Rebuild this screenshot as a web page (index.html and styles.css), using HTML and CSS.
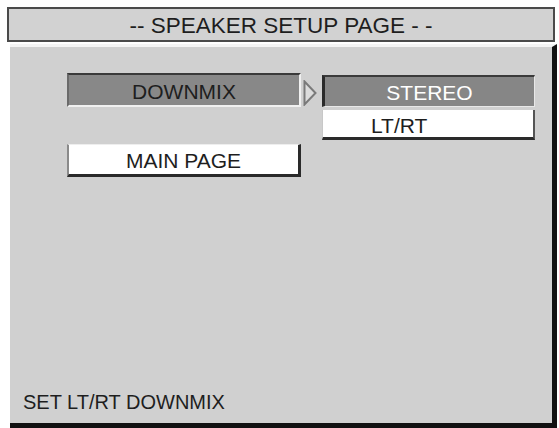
FILE: index.html
```html
<!DOCTYPE html>
<html lang="en">
<head>
    <meta charset="UTF-8">
    <meta name="viewport" content="width=device-width, initial-scale=1.0">
    <title>Speaker Setup</title>
    <link rel="stylesheet" href="styles.css">
</head>
<body>
    <div class="osd">
        <div class="title-bar">-- SPEAKER SETUP PAGE - -</div>

        <div class="panel">
            <div class="menu">
                <div class="menu-items">
                    <div class="item selected">DOWNMIX</div>
                    <div class="item raised">MAIN PAGE</div>
                </div>

                <!-- submenu pointer -->
                <svg class="pointer" width="14" height="26" viewBox="0 0 14 26">
                    <polygon points="1.5,1.5 12.5,13 1.5,24.5" fill="#dcdcdc" stroke="#7a7a7a" stroke-width="2"/>
                </svg>

                <div class="options">
                    <div class="option current">STEREO</div>
                    <div class="option">LT/RT</div>
                </div>
            </div>

            <div class="status">SET LT/RT DOWNMIX</div>
        </div>
    </div>
</body>
</html>
```

FILE: styles.css
```css
* {
    margin: 0;
    padding: 0;
    box-sizing: border-box;
}

body {
    font-family: "Liberation Sans", Arial, sans-serif;
    background: white;
    color: #1e1e1e;
    width: 559px;
    height: 428px;
    overflow: hidden;
}

.osd {
    padding-top: 7px;
}

.title-bar {
    margin-left: 7px;
    width: 548px;
    height: 35px;
    background: #d2d2d2;
    border: 2px solid #4a4a4a;
    text-align: center;
    font-size: 22.5px;
    line-height: 34px;
}

.panel {
    margin: 2px 0 0 10px;
    width: 547px;
    height: 384px;
    background: #d0d0d0;
    border-top: 3px solid #f4f4f4;
    border-right: 5px solid #111;
    border-bottom: 5px solid #111;
    display: flex;
    flex-direction: column;
    padding: 26px 0 0 57px;
}

.menu {
    display: flex;
    align-items: flex-start;
}

.menu-items {
    display: flex;
    flex-direction: column;
    gap: 37px;
    width: 234px;
}

.item {
    height: 34px;
    font-size: 21px;
    line-height: 33px;
    text-align: center;
}

.item.selected {
    background: #888888;
    border-top: 2px solid #3a3a3a;
    border-left: 2px solid #6a6a6a;
    border-bottom: 2px solid #f0f0f0;
    border-right: 2px solid #f0f0f0;
}

.item.raised {
    height: 33px;
    background: white;
    line-height: 32px;
    border-top: 1px solid #eeeeee;
    border-left: 2px solid #8a8a8a;
    border-bottom: 3px solid #2a2a2a;
    border-right: 3px solid #2a2a2a;
}

.pointer {
    margin: 7px 0 0 2px;
}

.options {
    margin: 2px 0 0 5px;
    width: 213px;
    display: flex;
    flex-direction: column;
    gap: 3px;
}

.option {
    height: 30px;
    background: white;
    font-size: 21px;
    line-height: 31px;
    padding-left: 48px;
    border-left: 1px solid #c8c8c8;
    border-bottom: 3px solid #2a2a2a;
    border-right: 2px solid #555;
}

.option.current {
    height: 32px;
    background: #868686;
    color: white;
    text-align: center;
    padding-left: 0;
    line-height: 32px;
    border-top: 2px solid #3a3a3a;
    border-left: 3px solid #2a2a2a;
    border-bottom: 1px solid #e8e8e8;
    border-right: 1px solid #e8e8e8;
}

.status {
    margin-top: auto;
    margin-left: -44px;
    margin-bottom: 9px;
    font-size: 20px;
    line-height: 24px;
}
```
